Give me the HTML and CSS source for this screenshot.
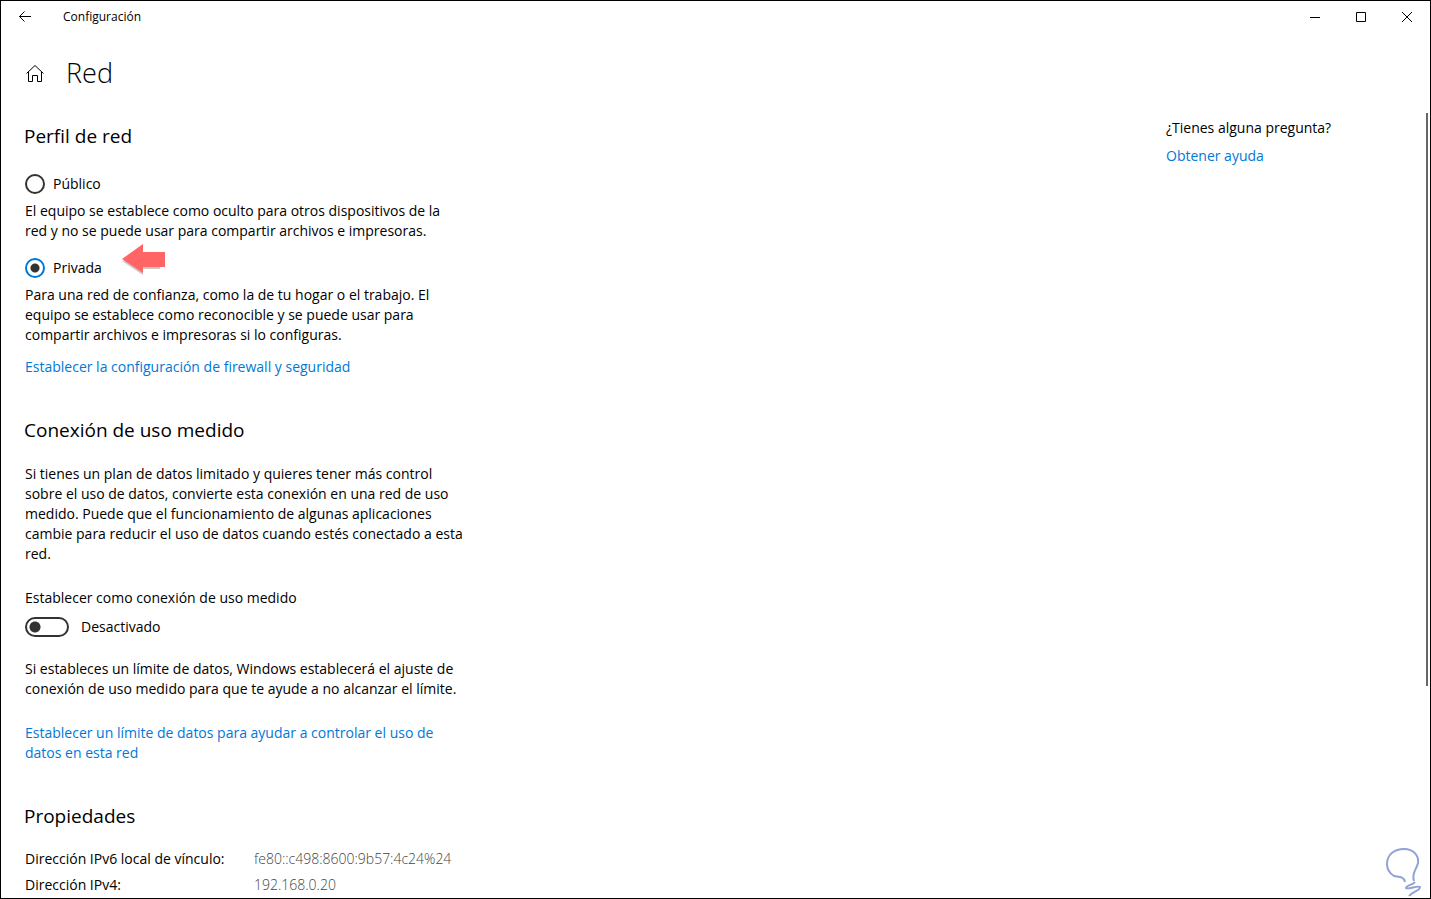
FILE: index.html
```
<!DOCTYPE html>
<html lang="es">
<head>
    <meta charset="UTF-8">
    <meta name="viewport" content="width=device-width, initial-scale=1.0">
    <title>Configuración</title>
    <link rel="stylesheet" href="styles.css">
</head>
<body>
    <div class="window">
        <div class="titlebar">
            <button type="button" class="back" aria-label="Atrás">
                <svg width="14" height="12" viewBox="0 0 14 12"><path d="M13 5.5H1.5M6.5 .5L1.5 5.5L6.5 10.5"/></svg>
            </button>
            <span class="app-name">Configuración</span>
            <div class="window-buttons">
                <button type="button" aria-label="Minimizar">
                    <svg width="11" height="11" viewBox="0 0 11 11"><path d="M0 5.5H10"/></svg>
                </button>
                <button type="button" aria-label="Maximizar">
                    <svg width="11" height="11" viewBox="0 0 11 11"><path d="M.5 .5H9.5V9.5H.5Z"/></svg>
                </button>
                <button type="button" aria-label="Cerrar">
                    <svg width="11" height="11" viewBox="0 0 11 11"><path d="M0 0L10 10M10 0L0 10"/></svg>
                </button>
            </div>
        </div>
        <header class="header">
            <a href="#" class="home" aria-label="Inicio">
                <svg width="18" height="18" viewBox="0 0 18 18"><path d="M.5 9.5L9 1.5L17.5 9.5M2.5 8V17.5H6.5V11.5H11.5V17.5H15.5V8"/></svg>
            </a>
            <h1>Red</h1>
        </header>
        <div class="content">
            <main>
                <section>
                    <h2>Perfil de red</h2>
                    <div class="option">
                        <input type="radio" name="perfil" id="publico">
                        <label for="publico">Público</label>
                    </div>
                    <p>El equipo se establece como oculto para otros dispositivos de la<br>red y no se puede usar para compartir archivos e impresoras.</p>
                    <div class="option">
                        <input type="radio" name="perfil" id="privada" checked>
                        <label for="privada">Privada</label>
                        <svg class="arrow" width="44" height="31" viewBox="0 0 44 31">
                            <path fill="#c9c9c9" d="M0 17L21 31V25H38V22L8 16Z"/>
                            <path fill="#ff6565" d="M0 15L21 0V8H43V23H21V29Z"/>
                        </svg>
                    </div>
                    <p>Para una red de confianza, como la de tu hogar o el trabajo. El equipo se establece como reconocible y se puede usar para compartir archivos e impresoras si lo configuras.</p>
                    <a href="#" class="link firewall">Establecer la configuración de firewall y seguridad</a>
                </section>
                <section>
                    <h2>Conexión de uso medido</h2>
                    <p>Si tienes un plan de datos limitado y quieres tener más control sobre el uso de datos, convierte esta conexión en una red de uso medido. Puede que el funcionamiento de algunas aplicaciones cambie para reducir el uso de datos cuando estés conectado a esta red.</p>
                    <label class="toggle-label" for="medido">Establecer como conexión de uso medido</label>
                    <div class="toggle">
                        <input type="checkbox" id="medido" role="switch">
                        <span>Desactivado</span>
                    </div>
                    <p>Si estableces un límite de datos, Windows establecerá el ajuste de conexión de uso medido para que te ayude a no alcanzar el límite.</p>
                    <a href="#" class="link limit">Establecer un límite de datos para ayudar a controlar el uso de datos en esta red</a>
                </section>
                <section>
                    <h2>Propiedades</h2>
                    <table>
                        <tr>
                            <th scope="row">Dirección IPv6 local de vínculo:</th>
                            <td>fe80::c498:8600:9b57:4c24%24</td>
                        </tr>
                        <tr>
                            <th scope="row">Dirección IPv4:</th>
                            <td>192.168.0.20</td>
                        </tr>
                    </table>
                </section>
            </main>
            <aside>
                <p>¿Tienes alguna pregunta?</p>
                <a href="#" class="link">Obtener ayuda</a>
            </aside>
            <div class="scrollbar"></div>
        </div>
        <svg class="bulb" width="36" height="50" viewBox="0 0 36 50">
            <path d="M19 34C18 28 12 29 8 28C3 25 1 21 1 16C1 6 9 1 18 1C28 1 33 8 32 15C31 21 25 25 28 33M29 34C27 37 20 37 20 40C22 42 32 37 34 39C34 43 27 43 23 48"/>
        </svg>
    </div>
</body>
</html>
```

FILE: styles.css
```
*{
    box-sizing: border-box;
}
body{
    margin: 0;
    font-family: 'Open Sans', 'Noto Sans', sans-serif;
    font-size: 14px;
    line-height: 20px;
    color: #000;
    background-color: #fff;
}
h1, h2, p{
    margin: 0;
    font-weight: 400;
}
button{
    display: flex;
    align-items: center;
    justify-content: center;
    padding: 0;
    border: none;
    background: none;
}
svg{
    display: block;
    fill: none;
    stroke: #000;
}
.window{
    position: relative;
    display: flex;
    flex-direction: column;
    height: 100vh;
    border: 1px solid #000;
    overflow: hidden;
}
.titlebar{
    display: flex;
    align-items: center;
    flex-shrink: 0;
    height: 32px;
}
.back{
    width: 48px;
    height: 32px;
}
.app-name{
    margin-left: 14px;
    font-size: 12px;
}
.window-buttons{
    display: flex;
    margin-left: auto;
}
.window-buttons button{
    width: 46px;
    height: 32px;
}
.header{
    display: flex;
    align-items: center;
    flex-shrink: 0;
    gap: 22px;
    height: 80px;
    padding-left: 25px;
}
.header h1{
    font-size: 27px;
    font-weight: 300;
    line-height: 36px;
}
.content{
    position: relative;
    display: flex;
    justify-content: space-between;
    flex: 1;
    min-height: 0;
}
main{
    width: 472px;
    padding: 9px 0 0 24px;
}
section{
    margin-bottom: 39px;
}
h2{
    margin-bottom: 20px;
    margin-left: -1px;
    font-size: 19px;
    line-height: 28px;
}
.option{
    display: flex;
    align-items: center;
    gap: 8px;
    height: 20px;
    margin: 17px 0 7px;
}
h2 + .option{
    margin-top: 24px;
}
input{
    appearance: none;
    flex-shrink: 0;
    margin: 0;
    height: 20px;
    border: 2px solid #333;
    background-color: #fff;
}
input[type="radio"]{
    width: 20px;
    border-radius: 50%;
}
input[type="radio"]:checked{
    border-color: #0078d7;
    background-image: radial-gradient(circle, #333 4px, transparent 5px);
}
.arrow{
    align-self: flex-end;
    flex-shrink: 0;
    margin: 0 0 3px 12px;
    stroke: none;
}
.link{
    display: block;
    color: #0078d7;
    text-decoration: none;
}
.firewall{
    margin-top: 12px;
}
.toggle-label{
    display: block;
    margin-top: 24px;
}
.toggle{
    display: flex;
    align-items: center;
    gap: 12px;
    margin: 9px 0 22px;
}
input[type="checkbox"]{
    width: 44px;
    border-radius: 10px;
    background-image: radial-gradient(circle at 8px 8px, #333 5px, transparent 6px);
}
.limit{
    margin-top: 24px;
}
table{
    margin-top: -4px;
    border-collapse: collapse;
}
th, td{
    height: 26px;
    padding: 0;
    font-weight: 400;
    text-align: left;
}
th{
    width: 229px;
}
td{
    color: #444;
    font-weight: 300;
}
aside{
    width: 264px;
    padding-top: 5px;
}
aside .link{
    margin-top: 8px;
}
.scrollbar{
    position: absolute;
    top: 0;
    right: 2px;
    width: 2px;
    height: 73%;
    background-color: #666;
}
.bulb{
    position: absolute;
    right: 8px;
    bottom: 0;
    stroke: #8fa3d6;
    stroke-width: 2;
}
```
